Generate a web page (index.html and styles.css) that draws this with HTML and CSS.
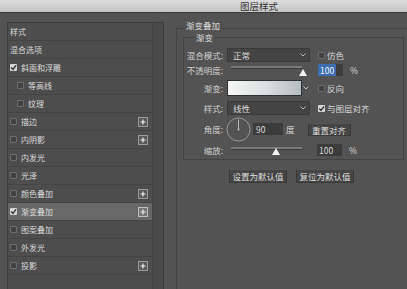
FILE: index.html
```html
<!DOCTYPE html>
<html lang="zh-CN">
<head>
  <meta charset="UTF-8">
  <title>图层样式</title>
  <link rel="stylesheet" href="styles.css">
</head>
<body>

  <!-- Window title -->
  <div class="titlebar">图层样式</div>

  <div class="dialog">

    <!-- Effects list on the left -->
    <div class="sidebar">
      <div class="list">
        <div class="item">样式</div>
        <div class="item">混合选项</div>
        <div class="item"><span class="cb on"><svg width="7" height="7" viewBox="0 0 7 7"><polyline points="1.2,3.6 3,5.4 6,1.4" fill="none" stroke="#2e2e2e" stroke-width="1.4"/></svg></span>斜面和浮雕</div>
        <div class="item sub"><span class="cb"></span>等高线</div>
        <div class="item sub"><span class="cb"></span>纹理</div>
        <div class="item"><span class="cb"></span>描边<span class="plus"><svg width="8" height="8" viewBox="0 0 8 8"><path d="M4 1.5v5M1.5 4h5" stroke="#eee" stroke-width="1.2"/></svg></span></div>
        <div class="item"><span class="cb"></span>内阴影<span class="plus"><svg width="8" height="8" viewBox="0 0 8 8"><path d="M4 1.5v5M1.5 4h5" stroke="#eee" stroke-width="1.2"/></svg></span></div>
        <div class="item"><span class="cb"></span>内发光</div>
        <div class="item"><span class="cb"></span>光泽</div>
        <div class="item"><span class="cb"></span>颜色叠加<span class="plus"><svg width="8" height="8" viewBox="0 0 8 8"><path d="M4 1.5v5M1.5 4h5" stroke="#eee" stroke-width="1.2"/></svg></span></div>
        <div class="item active"><span class="cb on"><svg width="7" height="7" viewBox="0 0 7 7"><polyline points="1.2,3.6 3,5.4 6,1.4" fill="none" stroke="#2e2e2e" stroke-width="1.4"/></svg></span>渐变叠加<span class="plus"><svg width="8" height="8" viewBox="0 0 8 8"><path d="M4 1.5v5M1.5 4h5" stroke="#eee" stroke-width="1.2"/></svg></span></div>
        <div class="item"><span class="cb"></span>图案叠加</div>
        <div class="item"><span class="cb"></span>外发光</div>
        <div class="item"><span class="cb"></span>投影<span class="plus"><svg width="8" height="8" viewBox="0 0 8 8"><path d="M4 1.5v5M1.5 4h5" stroke="#eee" stroke-width="1.2"/></svg></span></div>
      </div>
      <div class="rail"></div>
    </div>

    <!-- Settings on the right -->
    <div class="main">
      <fieldset class="group outer">
        <legend>渐变叠加</legend>

        <fieldset class="group inner">
          <legend>渐变</legend>

          <div class="frow r1">
            <span class="flabel">混合模式:</span>
            <div class="select">正常<svg class="chev" width="6" height="4" viewBox="0 0 6 4"><polyline points="0.5,0.5 3,3 5.5,0.5" fill="none" stroke="#bbb" stroke-width="1"/></svg></div>
            <label class="check"><span class="cb"></span>仿色</label>
          </div>

          <div class="frow r2">
            <span class="flabel">不透明度:</span>
            <div class="slider"><div class="track"></div><span class="thumb" style="left: 72px"></span></div>
            <div class="num selected"><span class="sel">100</span></div>
            <span class="unit">%</span>
          </div>

          <div class="frow r3">
            <span class="flabel">渐变:</span>
            <div class="swatch"></div>
            <div class="swatch-drop"><svg width="6" height="4" viewBox="0 0 6 4"><polyline points="0.5,0.5 3,3 5.5,0.5" fill="none" stroke="#bbb" stroke-width="1"/></svg></div>
            <label class="check"><span class="cb"></span>反向</label>
          </div>

          <div class="frow r4">
            <span class="flabel">样式:</span>
            <div class="select">线性<svg class="chev" width="6" height="4" viewBox="0 0 6 4"><polyline points="0.5,0.5 3,3 5.5,0.5" fill="none" stroke="#bbb" stroke-width="1"/></svg></div>
            <label class="check"><span class="cb on"><svg width="7" height="7" viewBox="0 0 7 7"><polyline points="1.2,3.6 3,5.4 6,1.4" fill="none" stroke="#2e2e2e" stroke-width="1.4"/></svg></span>与图层对齐</label>
          </div>

          <div class="frow r5">
            <span class="flabel">角度:</span>
            <svg class="dial" width="25" height="25" viewBox="0 0 25 25">
              <circle cx="12.5" cy="12.5" r="11.5" fill="none" stroke="#979797" stroke-width="1"/>
              <line x1="12.5" y1="12.5" x2="12.5" y2="2.5" stroke="#b5b5b5" stroke-width="1"/>
              <circle cx="12.5" cy="12.5" r="1" fill="#c8c8c8"/>
            </svg>
            <div class="num wide">90</div>
            <span class="unit deg">度</span>
            <button class="btn align">重置对齐</button>
          </div>

          <div class="frow r6">
            <span class="flabel">缩放:</span>
            <div class="slider"><div class="track"></div><span class="thumb" style="left: 45px"></span></div>
            <div class="num scale">100</div>
            <span class="unit">%</span>
          </div>
        </fieldset>

        <div class="defaults">
          <button class="btn">设置为默认值</button>
          <button class="btn">复位为默认值</button>
        </div>
      </fieldset>
    </div>

  </div>

</body>
</html>
```

FILE: styles.css
```css
/* Page and font */
html, body {
  margin: 0;
  padding: 0;
}
body {
  width: 407px;
  height: 289px;
  overflow: hidden;
  background: #535353;
  color: #d8d8d8;
  font-family: "Noto Sans CJK SC", "Noto Sans", sans-serif;
}

/* Title bar */
.titlebar {
  height: 12px;
  line-height: 12px;
  padding-left: 240px;
  font-size: 9.5px;
  color: #363636;
  background: linear-gradient(#dcdcdc, #c4c4c4);
  border-bottom: 1px solid #3c3c3c;
}

.dialog {
  display: flex;
  padding: 7px 0 0 7px;
  height: 269px;
  box-sizing: border-box;
  height: 276px;
}

/******************************************************
 * LEFT LIST
 ******************************************************/
.sidebar {
  display: flex;
  margin-top: 2px;
  width: 157px;
  box-sizing: border-box;
  border: 1px solid #3d3d3d;
  border-bottom: none;
  background: #4d4d4d;
}
.list {
  width: 144px;
}
.rail {
  flex: 1;
  background: #4a4a4a;
  border-left: 1px solid #454545;
}
.item {
  display: flex;
  align-items: center;
  height: 17px;
  padding-left: 2px;
  border-bottom: 1px solid #444;
  font-size: 8px;
  color: #dadada;
}
.item.sub {
  padding-left: 9px;
}
.item.active {
  background: #686868;
}

/* Checkboxes */
.cb {
  display: inline-flex;
  width: 7px;
  height: 7px;
  box-sizing: border-box;
  margin-right: 4px;
  border: 1px solid #6c6c6c;
  background: #434343;
  border-radius: 1px;
}
.cb.on {
  border: none;
  background: #d6d6d6;
}

/* Small "+" buttons */
.plus {
  display: flex;
  align-items: center;
  justify-content: center;
  width: 10px;
  height: 10px;
  box-sizing: border-box;
  margin-left: auto;
  margin-right: 4px;
  border: 1px solid #9a9a9a;
  background: #5a5a5a;
}
.active .plus {
  border-color: #bdbdbd;
  background: #777;
}

/******************************************************
 * RIGHT SETTINGS
 ******************************************************/
.main {
  flex: 1;
  margin-left: 12px;
  margin-right: -8px;
}
.group {
  margin: 0;
  min-width: 0;
  border: 1px solid #424242;
}
.group legend {
  font-size: 8.5px;
  line-height: 10px;
  color: #dcdcdc;
}
.outer {
  box-sizing: border-box;
  height: 269px;
  padding: 0 10px 0 6px;
  border-bottom: none;
}
.outer > legend {
  margin-left: 1px;
  padding: 0 2px 6px;
}
.inner {
  margin-top: -4px;
  padding: 6px 0 2px 0;
}
.inner > legend {
  margin-left: 10px;
  padding: 0 2px;
}

/* Form rows */
.frow {
  display: flex;
  align-items: center;
  height: 14px;
  font-size: 8.5px;
}
.r2 { margin-top: 1px; }
.r3 { margin-top: 3px; height: 16px; }
.r4 { margin-top: 5px; }
.r5 { margin-top: 2px; height: 24px; }
.r6 { margin-top: 2px; }

.flabel {
  width: 39px;
  margin-right: 4px;
  text-align: right;
  color: #cfcfcf;
}

.select {
  display: flex;
  align-items: center;
  width: 83px;
  height: 14px;
  box-sizing: border-box;
  padding-left: 5px;
  background: #444;
  border: 1px solid #3a3a3a;
}
.chev {
  margin-left: auto;
  margin-right: 3px;
}

.check {
  display: flex;
  align-items: center;
  margin-left: 8px;
}
.check .cb {
  margin-right: 2px;
}

/* Sliders */
.slider {
  position: relative;
  align-self: stretch;
  width: 83px;
}
.track {
  margin: 3px 8px 0 4px;
  height: 2px;
  background: #7a7a7a;
  border-bottom: 1px solid #3e3e3e;
}
.thumb {
  position: absolute;
  top: 6px;
  width: 0;
  height: 0;
  border-left: 4px solid transparent;
  border-right: 4px solid transparent;
  border-bottom: 7px solid #f2f2f2;
}
.r6 .track {
  margin-top: 4px;
}
.r6 .thumb {
  top: 5px;
}

/* Number fields */
.num {
  width: 25px;
  height: 12px;
  line-height: 12px;
  box-sizing: border-box;
  margin-left: 8px;
  padding-left: 2px;
  background: #3c3c3c;
}
.num.selected {
  padding-left: 0;
}
.sel {
  display: inline-block;
  padding: 0 2px;
  background: #3e6db0;
  color: #eef3fb;
}
.num.wide {
  width: 30px;
  margin-left: 2px;
  padding-left: 3px;
}
.num.scale {
  margin-left: 7px;
}
.unit {
  margin-left: 7px;
}
.unit.deg {
  margin-left: 3px;
}

/* Gradient picker */
.swatch {
  width: 75px;
  height: 16px;
  box-sizing: border-box;
  border: 1px solid #2f2f2f;
  background: linear-gradient(to right, #f4f4f4, #dfe3e3 45%, #b5bebe);
}
.swatch-drop {
  display: flex;
  align-items: center;
  justify-content: center;
  width: 8px;
  height: 16px;
}

.dial {
  margin-left: -1px;
}

/* Buttons */
.btn {
  height: 14px;
  padding: 0;
  font-family: inherit;
  font-size: 8.5px;
  color: #dedede;
  background: #454545;
  border: 1px solid #3a3a3a;
  border-top-color: #555;
}
.btn.align {
  width: 43px;
  height: 13px;
  margin-left: 13px;
}
.defaults {
  display: flex;
  gap: 9px;
  margin: 9px 0 0 46px;
}
.defaults .btn {
  width: 58px;
}
```
